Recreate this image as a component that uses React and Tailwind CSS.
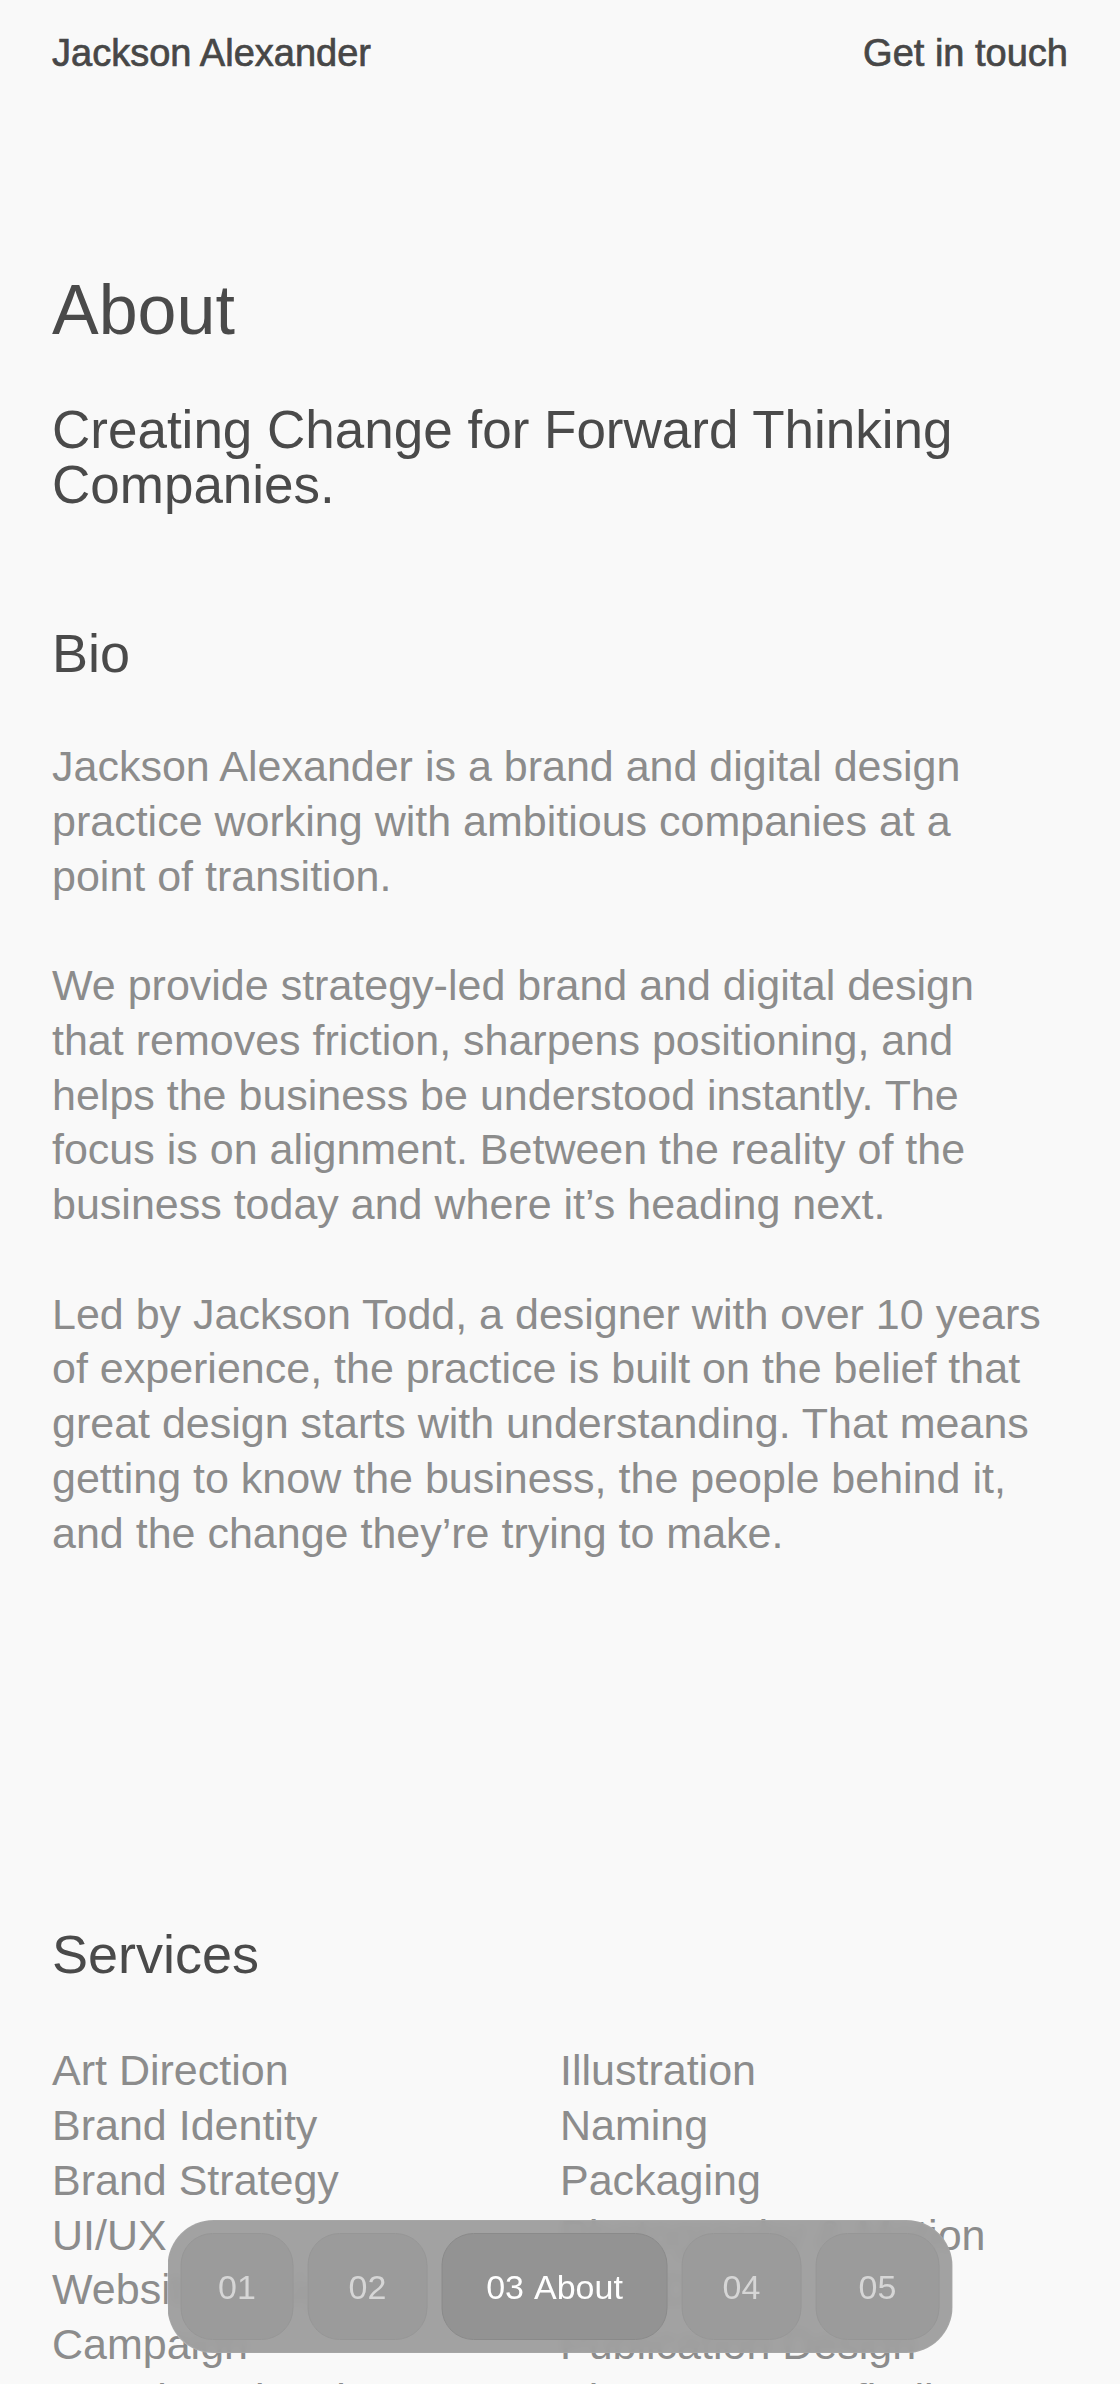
import React from "react";

const p1 = [
  "Jackson Alexander is a brand and digital design",
  "practice working with ambitious companies at a",
  "point of transition.",
];
const p2 = [
  "We provide strategy-led brand and digital design",
  "that removes friction, sharpens positioning, and",
  "helps the business be understood instantly. The",
  "focus is on alignment. Between the reality of the",
  "business today and where it\u2019s heading next.",
];
const p3 = [
  "Led by Jackson Todd, a designer with over 10 years",
  "of experience, the practice is built on the belief that",
  "great design starts with understanding. That means",
  "getting to know the business, the people behind it,",
  "and the change they\u2019re trying to make.",
];

const left = [
  "Art Direction",
  "Brand Identity",
  "Brand Strategy",
  "UI/UX",
  "Website Design",
  "Campaign",
  "Creative Direction",
  "Digital Products",
];
const right = [
  "Illustration",
  "Naming",
  "Packaging",
  "Photography & Motion",
  "Print Design",
  "Publication Design",
  "Signage & Wayfinding",
  "Tone of Voice",
];

function Para({ lines }) {
  return (
    <p className="whitespace-nowrap">
      {lines.map((l, i) => (
        <React.Fragment key={i}>
          {l}
          {i < lines.length - 1 && <br />}
        </React.Fragment>
      ))}
    </p>
  );
}

export default function App() {
  return (
    <div className="min-h-screen bg-[#f9f9f9] font-['Liberation_Sans',Arial,sans-serif] pb-[200px]">
      <header className="flex justify-between px-[52px] pt-[34px] text-[38px] leading-[38px] text-[#474747] [-webkit-text-stroke:0.7px_#474747]">
        <span>Jackson Alexander</span>
        <span>Get in touch</span>
      </header>

      <main className="px-[52px]">
        <h1 className="mt-[203px] text-[70px] leading-[70px] text-[#4a4a4a]">About</h1>
        <h2 className="mt-[57px] text-[53px] leading-[55px] text-[#4a4a4a]">
          Creating Change for Forward Thinking
          <br />
          Companies.
        </h2>

        <h2 className="mt-[114px] text-[54px] leading-[54px] text-[#4a4a4a]">Bio</h2>
        <div className="mt-[59px] flex flex-col gap-[54.75px] text-[43px] leading-[54.75px] text-[#8c8c8c]">
          <Para lines={p1} />
          <Para lines={p2} />
          <Para lines={p3} />
        </div>

        <h2 className="mt-[367px] text-[54px] leading-[54px] text-[#4a4a4a]">Services</h2>
        <div className="mt-[62px] grid grid-cols-2 text-[43px] leading-[54.75px] text-[#8c8c8c]">
          <ul className="flex flex-col">
            {left.map((s) => (
              <li key={s} className="whitespace-nowrap">{s}</li>
            ))}
          </ul>
          <ul className="flex flex-col">
            {right.map((s) => (
              <li key={s} className="whitespace-nowrap">{s}</li>
            ))}
          </ul>
        </div>
      </main>

      <nav className="fixed bottom-[31px] left-1/2 -translate-x-1/2 flex items-center gap-[14px] rounded-[46px] border border-[#a8a8a8]/80 bg-[rgba(156,156,156,0.94)] backdrop-blur-[4px] p-[12px] text-[34px] leading-none">
        <button className="flex h-[107px] w-[113px] items-center justify-center rounded-[32px] border border-[#969696] bg-[#9b9b9b] text-[#d6d6d6]">
          01
        </button>
        <button className="flex h-[107px] w-[120px] items-center justify-center rounded-[32px] border border-[#969696] bg-[#9b9b9b] text-[#d6d6d6]">
          02
        </button>
        <button className="flex h-[107px] w-[226px] items-center justify-center gap-[10px] rounded-[32px] border border-[#8a8a8a] bg-[#939393] text-white">
          <span>03</span>
          <span>About</span>
        </button>
        <button className="flex h-[107px] w-[120px] items-center justify-center rounded-[32px] border border-[#969696] bg-[#9b9b9b] text-[#d6d6d6]">
          04
        </button>
        <button className="flex h-[107px] w-[124px] items-center justify-center rounded-[32px] border border-[#969696] bg-[#9b9b9b] text-[#d6d6d6]">
          05
        </button>
      </nav>
    </div>
  );
}
